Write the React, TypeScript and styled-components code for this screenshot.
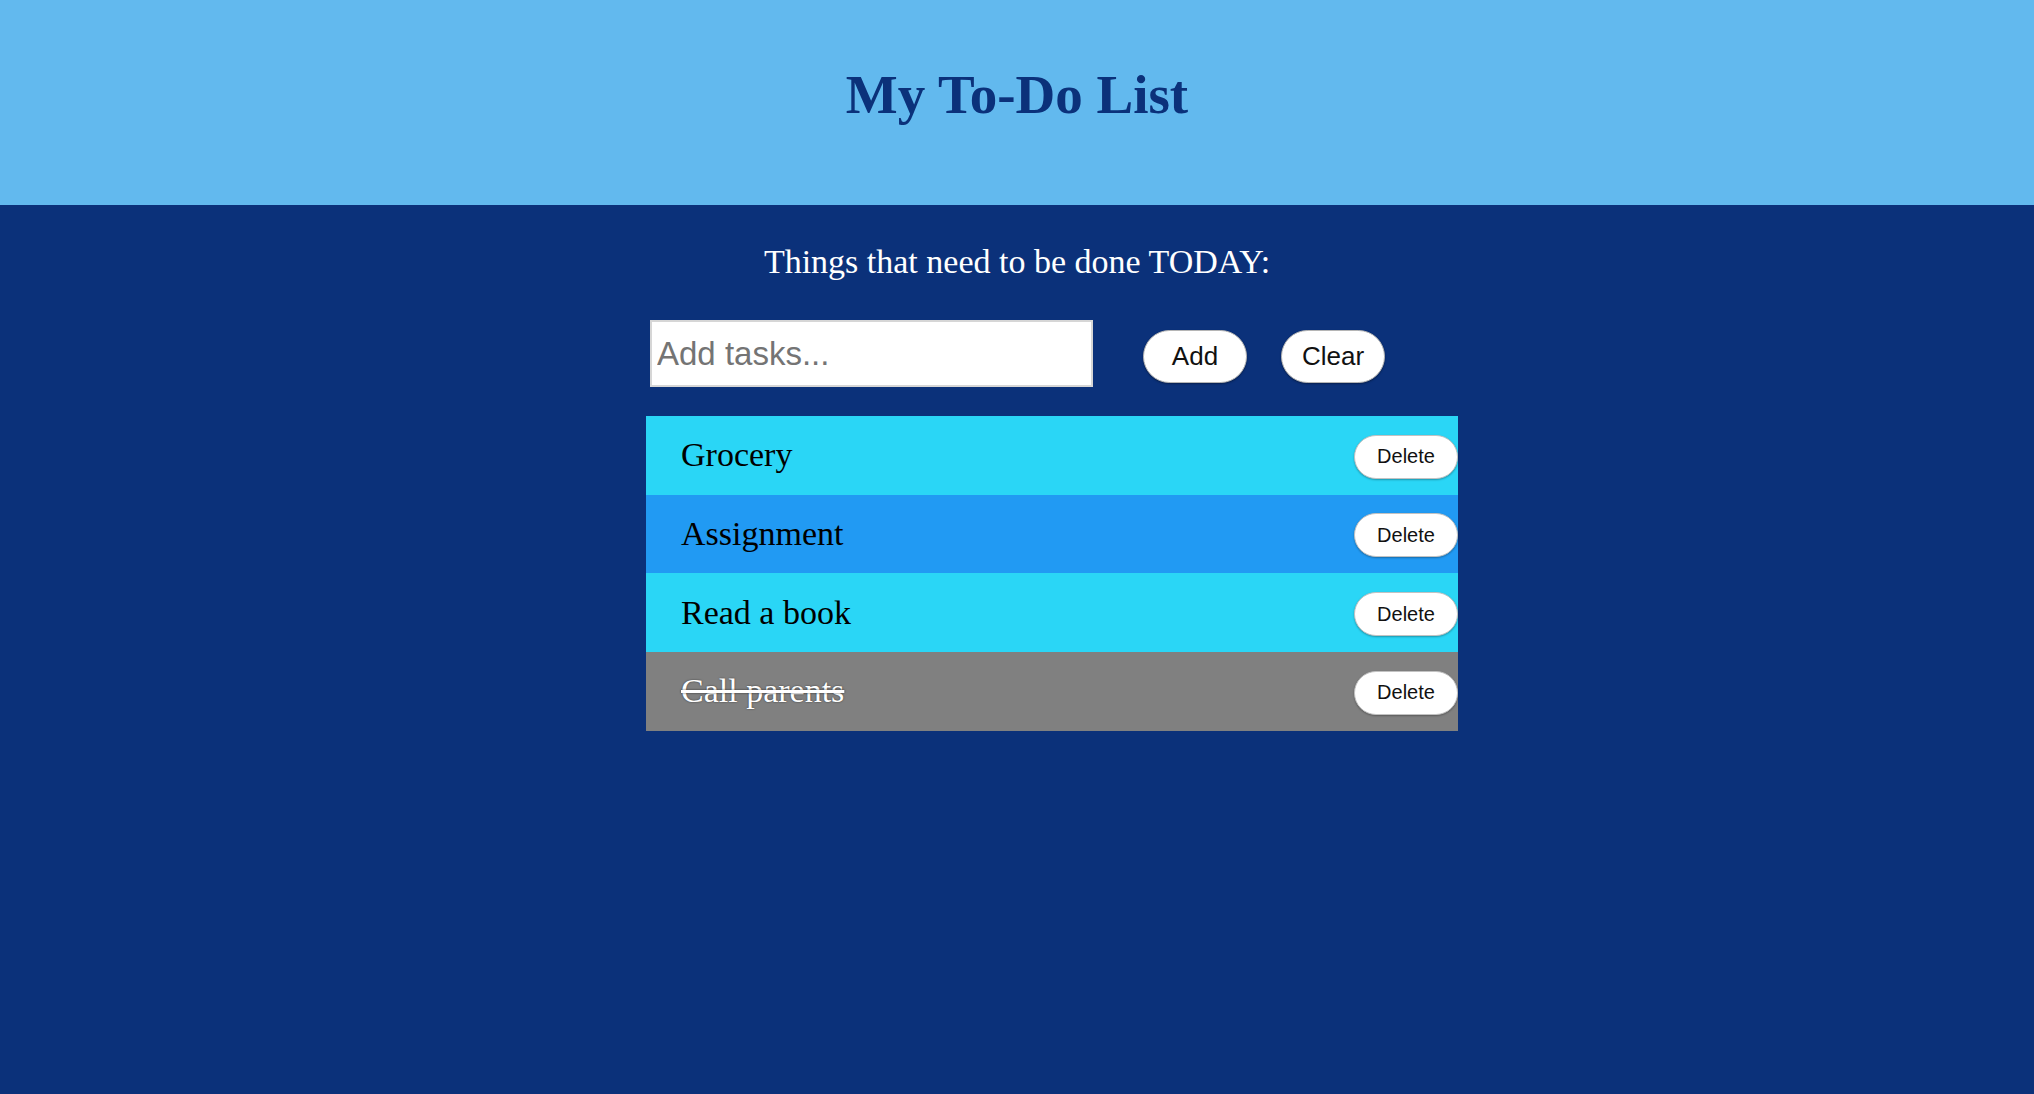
import React, { useState } from 'react';
import styled, { createGlobalStyle } from 'styled-components';

const GlobalStyle = createGlobalStyle`
  html, body {
    margin: 0;
    padding: 0;
    background: #0b317a;
    font-family: 'Liberation Serif', 'Times New Roman', serif;
  }
`;

type Todo = { id: number; text: string; done: boolean };

const initialTodos: Todo[] = [
  { id: 1, text: 'Grocery', done: false },
  { id: 2, text: 'Assignment', done: false },
  { id: 3, text: 'Read a book', done: false },
  { id: 4, text: 'Call parents', done: true },
];

export default function App() {
  const [todos, setTodos] = useState<Todo[]>(initialTodos);
  const [draft, setDraft] = useState('');

  const addTodo = () => {
    if (!draft.trim()) return;
    setTodos([...todos, { id: Date.now(), text: draft.trim(), done: false }]);
    setDraft('');
  };

  const toggle = (id: number) =>
    setTodos(todos.map((t) => (t.id === id ? { ...t, done: !t.done } : t)));

  const remove = (id: number) => setTodos(todos.filter((t) => t.id !== id));

  return (
    <Page>
      <GlobalStyle />
      <Header>
        <Title>My To-Do List</Title>
      </Header>
      <Main>
        <Subtitle>Things that need to be done TODAY:</Subtitle>
        <Content>
          <Form
            onSubmit={(e) => {
              e.preventDefault();
              addTodo();
            }}
          >
            <TaskInput
              placeholder="Add tasks..."
              value={draft}
              onChange={(e) => setDraft(e.target.value)}
            />
            <PillButton type="submit">Add</PillButton>
            <PillButton type="button" onClick={() => setTodos([])}>
              Clear
            </PillButton>
          </Form>
          <List>
            {todos.map((todo, i) => (
              <Row key={todo.id} $done={todo.done} $alt={i % 2 === 1}>
                <TaskText $done={todo.done} onClick={() => toggle(todo.id)}>
                  {todo.text}
                </TaskText>
                <DeleteButton onClick={() => remove(todo.id)}>Delete</DeleteButton>
              </Row>
            ))}
          </List>
        </Content>
      </Main>
    </Page>
  );
}

const Page = styled.div`
  min-height: 1094px;
  background: #0b317a;
`;

const Header = styled.header`
  height: 205px;
  box-sizing: border-box;
  padding-top: 63px;
  background: #62b9ee;
  text-align: center;
`;

const Title = styled.h1`
  margin: 0;
  font-size: 55px;
  line-height: 64px;
  font-weight: bold;
  color: #0b317a;
`;

const Main = styled.main`
  display: flex;
  flex-direction: column;
  align-items: center;
  padding-top: 37px;
`;

const Subtitle = styled.h2`
  margin: 0;
  font-size: 34px;
  line-height: 40px;
  font-weight: normal;
  color: #ffffff;
`;

const Content = styled.div`
  width: 742px;
  margin-top: 38px;
`;

const Form = styled.form`
  display: flex;
  align-items: flex-start;
  padding-left: 4px;
`;

const TaskInput = styled.input`
  width: 443px;
  height: 67px;
  box-sizing: border-box;
  border: 2px solid #d6d6d6;
  padding: 0 0 0 5px;
  font-family: 'Liberation Sans', Arial, sans-serif;
  font-size: 33px;
  color: #222;
  outline: none;

  &::placeholder {
    color: #747474;
  }
`;

const PillButton = styled.button`
  width: 104px;
  height: 53px;
  margin: 10px 0 0 34px;
  border: 1px solid #b5b5b5;
  border-radius: 27px;
  background: #ffffff;
  box-shadow: 0 1px 2px rgba(0, 0, 0, 0.35);
  font-family: 'Liberation Sans', Arial, sans-serif;
  font-size: 26px;
  color: #111;
  cursor: pointer;

  &:first-of-type {
    margin-left: 50px;
  }
`;

const List = styled.ul`
  list-style: none;
  margin: 29px 0 0;
  padding: 0;
  width: 812px;
`;

const Row = styled.li<{ $done: boolean; $alt: boolean }>`
  display: flex;
  align-items: center;
  justify-content: space-between;
  height: 78.67px;
  padding-left: 35px;
  background: ${(p) => (p.$done ? '#808080' : p.$alt ? '#219af3' : '#2ad6f6')};
`;

const TaskText = styled.span<{ $done: boolean }>`
  font-size: 34px;
  cursor: pointer;
  color: ${(p) => (p.$done ? '#ffffff' : '#000000')};
  text-decoration: ${(p) => (p.$done ? 'line-through' : 'none')};
  text-shadow: ${(p) => (p.$done ? '0 0 2px rgba(0, 0, 0, 0.6)' : 'none')};
`;

const DeleteButton = styled.button`
  width: 104px;
  height: 44px;
  margin-top: 3px;
  border: 1px solid #c2c2c2;
  border-radius: 22px;
  background: #ffffff;
  box-shadow: 0 1px 2px rgba(0, 0, 0, 0.3);
  font-family: 'Liberation Sans', Arial, sans-serif;
  font-size: 20px;
  color: #111;
  cursor: pointer;
`;
